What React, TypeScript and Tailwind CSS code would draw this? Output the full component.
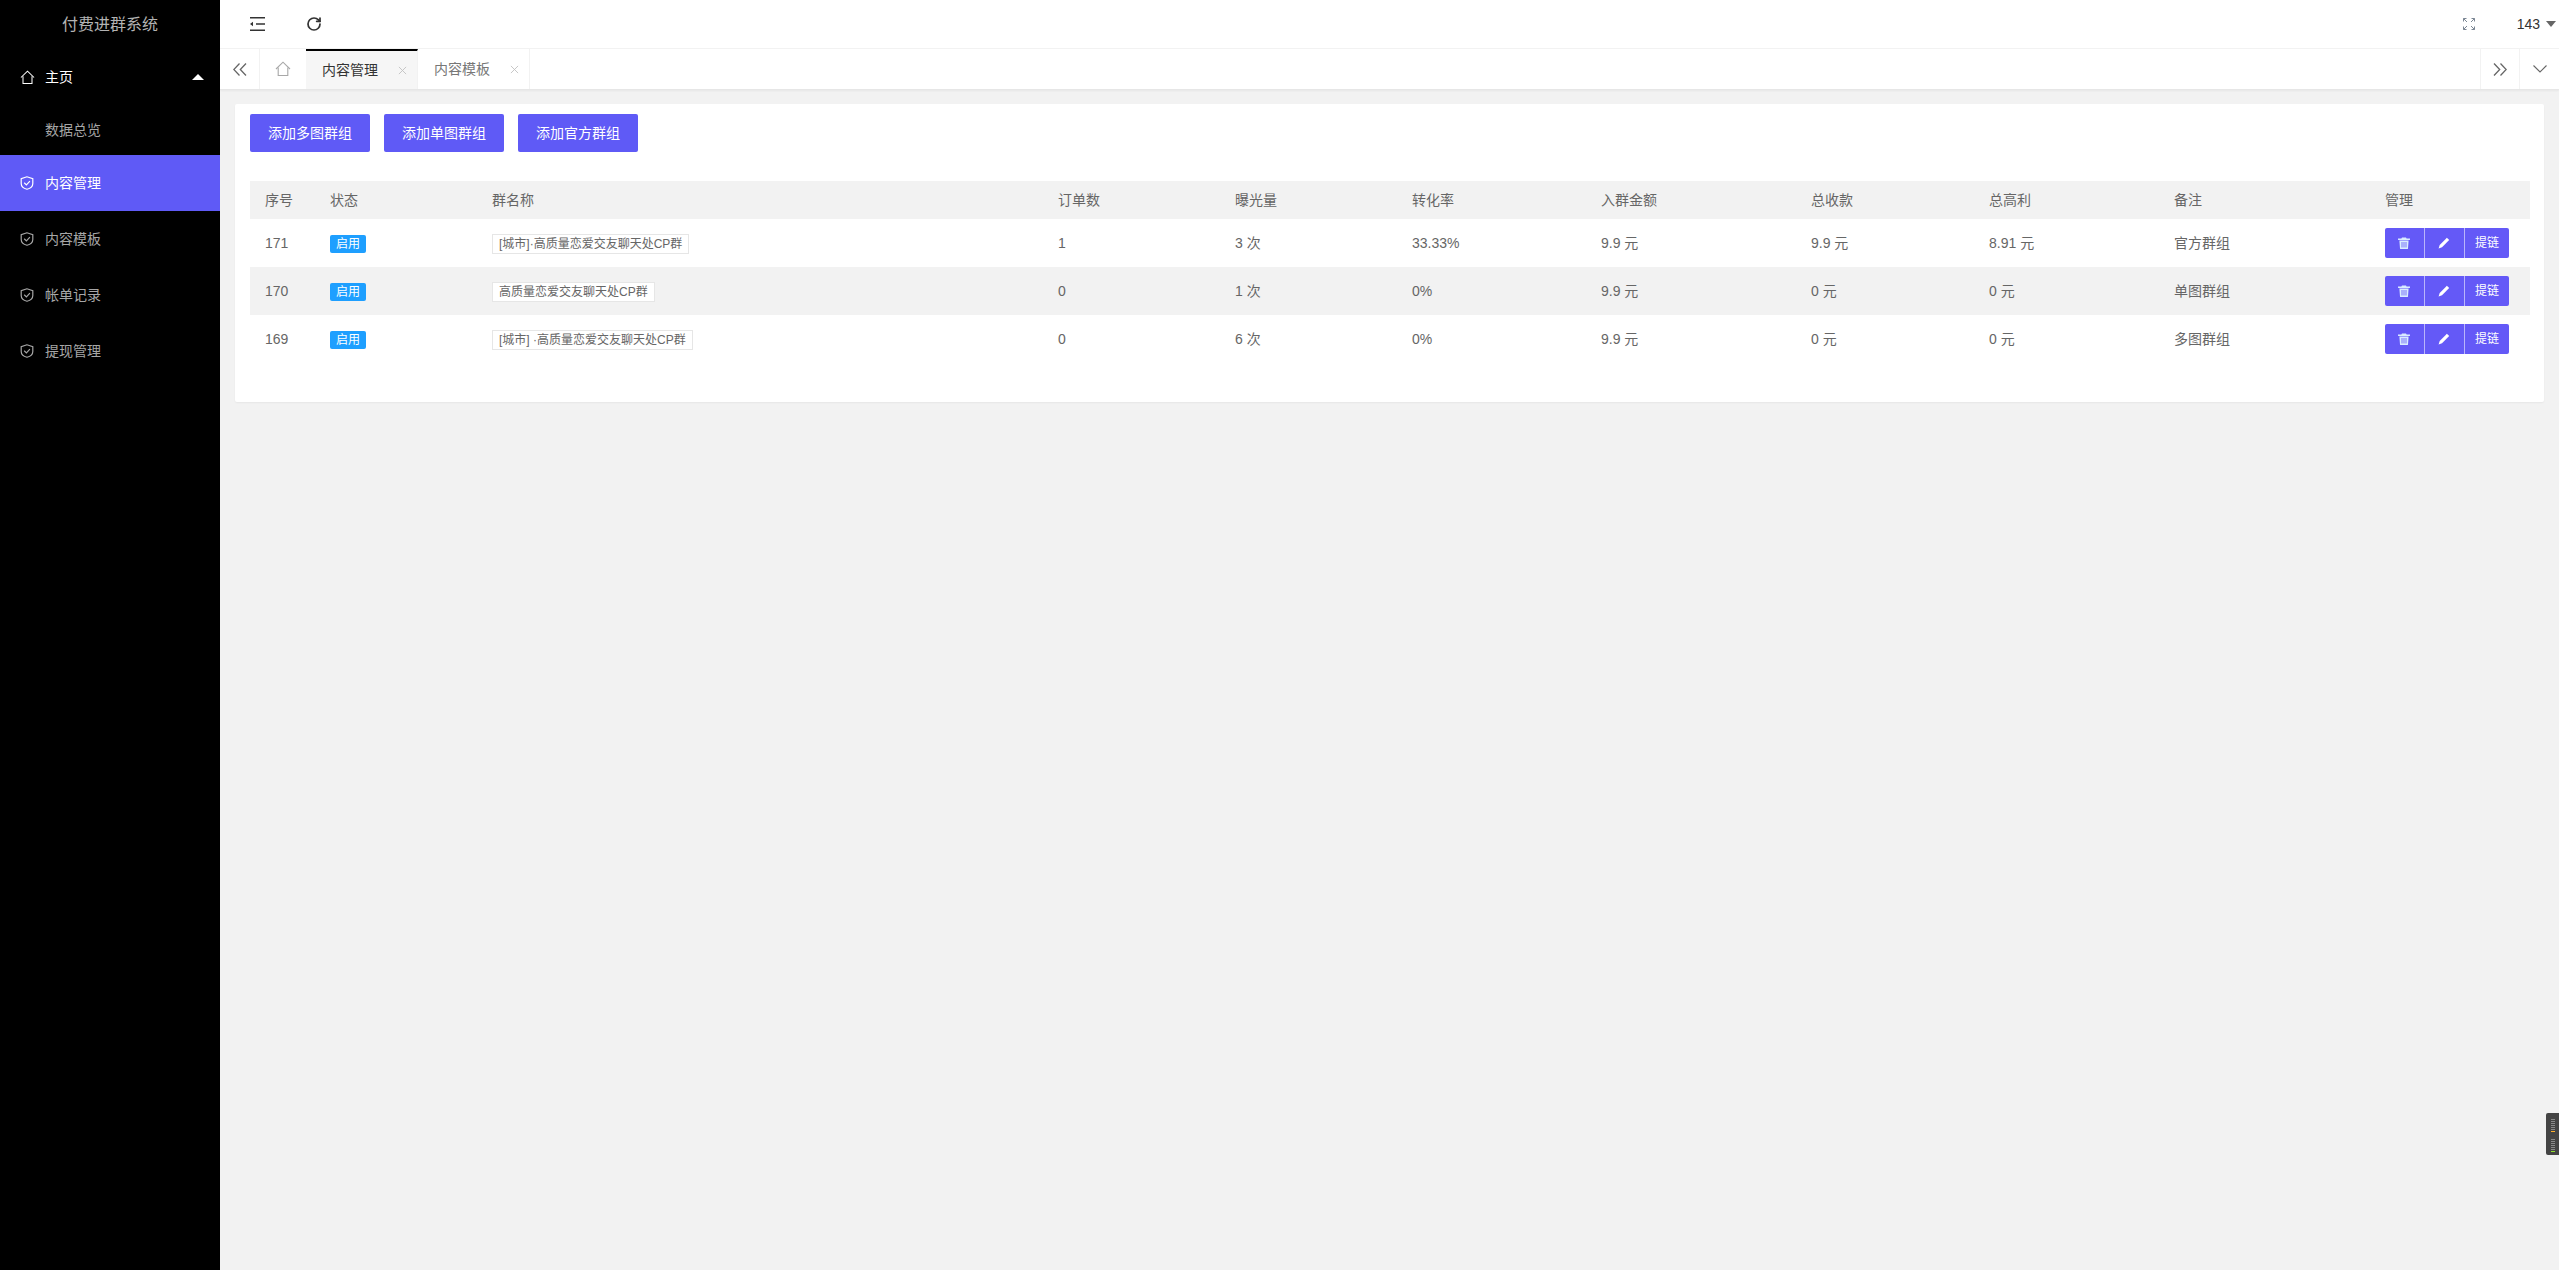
import { RotateCw } from "lucide-react";

const ROWS = [
  { id: 171, name: "[城市]·高质量恋爱交友聊天处CP群", orders: "1", views: "3 次", rate: "33.33%", fee: "9.9 元", income: "9.9 元", profit: "8.91 元", note: "官方群组" },
  { id: 170, name: "高质量恋爱交友聊天处CP群", orders: "0", views: "1 次", rate: "0%", fee: "9.9 元", income: "0 元", profit: "0 元", note: "单图群组" },
  { id: 169, name: "[城市] ·高质量恋爱交友聊天处CP群", orders: "0", views: "6 次", rate: "0%", fee: "9.9 元", income: "0 元", profit: "0 元", note: "多图群组" },
];

const HomeIcon = ({ className }: { className?: string }) => (
  <svg viewBox="0 0 16 16" fill="none" stroke="currentColor" strokeWidth="1.1" className={className}>
    <path d="M1 8 8 1.2 15 8" />
    <path d="M3.2 6.6V14.5H12.8V6.6" />
  </svg>
);

const ShieldIcon = () => (
  <svg viewBox="0 0 14 14" fill="none" stroke="currentColor" strokeWidth="1.2" className="h-[14px] w-[14px] shrink-0">
    <path d="M7 .8 1.2 2.6V7.4C1.2 10.4 4 12.4 7 13.3 10 12.4 12.8 10.4 12.8 7.4V2.6Z" />
    <path d="M4.2 6.8 6.4 8.9 9.9 5.2" />
  </svg>
);

const SideItem = ({ label, active }: { label: string; active?: boolean }) => (
  <div className={`flex h-[56px] items-center gap-[11px] pl-[20px] text-[14px] ${active ? "bg-[#5f5af6] text-white" : "text-[#a6a6a6]"}`}>
    <ShieldIcon />
    <span>{label}</span>
  </div>
);

const TabClose = () => (
  <svg viewBox="0 0 10 10" stroke="#c2c2c2" strokeWidth="1" className="ml-auto h-[9px] w-[9px]">
    <path d="M1 1 9 9M9 1 1 9" />
  </svg>
);

const Tab = ({ label, active }: { label: string; active?: boolean }) => (
  <div className={`flex h-full w-[112px] items-center border-r border-[#f2f2f2] pl-[16px] pr-[10px] text-[14px] ${active ? "border-t-2 border-t-black bg-[#f6f6f6] text-[#333]" : "text-[#777]"}`}>
    <span>{label}</span>
    <TabClose />
  </div>
);

const HEAD = [
  { label: "序号", w: "w-[65px]" },
  { label: "状态", w: "w-[162px]" },
  { label: "群名称", w: "w-[566px]" },
  { label: "订单数", w: "w-[177px]" },
  { label: "曝光量", w: "w-[177px]" },
  { label: "转化率", w: "w-[189px]" },
  { label: "入群金额", w: "w-[210px]" },
  { label: "总收款", w: "w-[178px]" },
  { label: "总高利", w: "w-[185px]" },
  { label: "备注", w: "w-[211px]" },
  { label: "管理", w: "w-[160px]" },
];

const Cell = ({ children }: { children: React.ReactNode }) => (
  <td className="pl-[15px] align-middle">{children}</td>
);

const Actions = () => (
  <div className="flex h-[30px] w-[124px] overflow-hidden rounded-[2px] bg-[#6459f7] text-[12px] text-white">
    <div className="flex w-[40px] items-center justify-center border-r border-[#b9b5fb] pr-[2px]">
      <svg viewBox="0 0 12 12" className="h-[12px] w-[12px] fill-[#d9ecff]">
        <path d="M4 .5h4l.6 1H11.6a.4.4 0 0 1 0 1.4H.4a.4.4 0 0 1 0-1.4H3.4Z" />
        <path fillRule="evenodd" d="M1.4 3.6h9.2L10 11.4a.6.6 0 0 1-.6.6H2.600a.6.6 0 0 1-.6-.6ZM3.600 5v5.400h.8V5Zm2 0v5.400h.8V5Zm2 0v5.400h.8V5Z" />
      </svg>
    </div>
    <div className="flex w-[40px] items-center justify-center border-r border-[#b9b5fb] pr-[2px]">
      <svg viewBox="0 0 12 12" className="h-[12px] w-[12px] fill-white">
        <path d="M8.900.8 11.200 3.100 4 10.300.6 11.400 1.700 8Z" />
      </svg>
    </div>
    <div className="flex flex-1 items-center justify-center">提链</div>
  </div>
);

const App = () => {
  return (
    <div className="flex h-screen w-full overflow-hidden bg-[#f2f2f2] font-['Liberation_Sans','Noto_Sans_CJK_SC',sans-serif] text-[14px] text-[#666]">
      <aside className="w-[220px] shrink-0 bg-black">
        <div className="flex h-[49px] items-center justify-center text-[16px] text-[#b3b3b3]">付费进群系统</div>
        <div className="flex h-[56px] items-center gap-[10px] pl-[20px] pr-[16px] text-white">
          <HomeIcon className="h-[15px] w-[15px]" />
          <span>主页</span>
          <span className="ml-auto h-0 w-0 border-x-[6px] border-b-[6px] border-x-transparent border-b-white" />
        </div>
        <div className="flex h-[50px] items-center pl-[45px] text-[#a6a6a6]">数据总览</div>
        <SideItem label="内容管理" active />
        <SideItem label="内容模板" />
        <SideItem label="帐单记录" />
        <SideItem label="提现管理" />
      </aside>

      <main className="flex min-w-0 flex-1 flex-col">
        <header className="flex h-[49px] items-center border-b border-[#f2f2f2] bg-white pl-[30px] pr-[3px]">
          <svg viewBox="0 0 15 14" className="h-[14px] w-[15px] fill-[#333]">
            <path d="M0 0h15v1.400H0ZM0 12.600h15V14H0ZM6 6.300h9v1.400H6ZM0 7l3-2.200v4.400Z" />
          </svg>
          <RotateCw size={16} strokeWidth={2.6} className="ml-[41px] text-[#333]" />
          <svg viewBox="0 0 12 12" fill="none" stroke="#7c8794" strokeWidth="1" className="ml-auto h-[12px] w-[12px]">
            <path d="M.5 3.500V.5H3.500M.5.5 4 4M8.500.5H11.500V3.500M11.500.5 8 4M.5 8.500V11.500H3.500M.5 11.500 4 8M8.500 11.500H11.500V8.500M11.500 11.500 8 8" />
          </svg>
          <span className="ml-[42px] text-[14px] text-[#333]">143</span>
          <span className="ml-[6px] h-0 w-0 border-x-[5px] border-t-[6px] border-x-transparent border-t-[#666]" />
        </header>

        <div className="flex h-[41px] items-center border-b border-[#e6e6e6] bg-white shadow-[0_1px_2px_rgba(0,0,0,0.05)]">
          <div className="flex h-full w-[40px] items-center justify-center border-r border-[#f2f2f2]">
            <svg viewBox="0 0 14 13" fill="none" stroke="#666" strokeWidth="1.300" className="h-[13px] w-[14px]">
              <path d="M6.500.5.800 6.500 6.500 12.500M13 .5 7.300 6.500 13 12.500" />
            </svg>
          </div>
          <div className="flex h-full w-[46px] items-center justify-center">
            <HomeIcon className="h-[16px] w-[16px] text-[#a8a8a8]" />
          </div>
          <Tab label="内容管理" active />
          <Tab label="内容模板" />
          <div className="ml-auto flex h-full w-[40px] items-center justify-center border-x border-[#f2f2f2]">
            <svg viewBox="0 0 14 13" fill="none" stroke="#666" strokeWidth="1.300" className="h-[13px] w-[14px]">
              <path d="M1 .5 6.700 6.500 1 12.500M7.500.5 13.200 6.500 7.500 12.500" />
            </svg>
          </div>
          <div className="flex h-full w-[39px] items-center justify-center">
            <svg viewBox="0 0 14 8" fill="none" stroke="#666" strokeWidth="1.100" className="h-[8px] w-[14px]">
              <path d="M.5.5 7 7 13.500.5" />
            </svg>
          </div>
        </div>

        <div className="px-[15px] pt-[14px]">
          <section className="rounded-[2px] bg-white px-[15px] pb-[39px] pt-[10px] shadow-[0_1px_2px_rgba(0,0,0,0.05)]">
            <div className="flex gap-[14px]">
              {["添加多图群组", "添加单图群组", "添加官方群组"].map((label) => (
                <button key={label} className="h-[38px] w-[120px] rounded-[2px] bg-[#5f5af6] text-[14px] text-white">
                  {label}
                </button>
              ))}
            </div>

            <table className="mt-[29px] w-full table-fixed border-collapse">
              <thead>
                <tr className="h-[38px] bg-[#f2f2f2]">
                  {HEAD.map((col) => (
                    <th key={col.label} className={`${col.w} pl-[15px] text-left font-normal`}>
                      {col.label}
                    </th>
                  ))}
                </tr>
              </thead>
              <tbody>
                {ROWS.map((row, i) => (
                  <tr key={row.id} className={`h-[48px] ${i === 1 ? "bg-[#f2f2f2]" : "bg-white"}`}>
                    <Cell>{row.id}</Cell>
                    <Cell>
                      <span className="mt-[2px] flex h-[18px] w-[36px] items-center justify-center rounded-[2px] bg-[#1e9fff] text-[12px] text-white">启用</span>
                    </Cell>
                    <Cell>
                      <span className="mt-[2px] flex h-[20px] w-fit items-center whitespace-pre border border-[#e6e6e6] bg-white px-[6px] text-[12px]">{row.name}</span>
                    </Cell>
                    <Cell>{row.orders}</Cell>
                    <Cell>{row.views}</Cell>
                    <Cell>{row.rate}</Cell>
                    <Cell>{row.fee}</Cell>
                    <Cell>{row.income}</Cell>
                    <Cell>{row.profit}</Cell>
                    <Cell>{row.note}</Cell>
                    <Cell>
                      <Actions />
                    </Cell>
                  </tr>
                ))}
              </tbody>
            </table>
          </section>
        </div>
      </main>

      {/* floating meter stuck to the right edge */}
      <div className="fixed right-0 top-[1113px] flex h-[42px] w-[13px] flex-col items-center gap-[1px] rounded-l-[2px] bg-[#444] pl-[1px] pt-[6px]">
        {[0, 1, 2, 3, 4, 5].map((n) => (
          <span key={n} className="h-[1px] w-[4px] bg-[#8a8a8a]" />
        ))}
        <span className="h-[1px] w-[4px] bg-[#ffb02e]" />
        <span className="h-[5px] w-[4px]" />
        {[6, 7, 8, 9, 10, 11].map((n) => (
          <span key={n} className="h-[1px] w-[4px] bg-[#8a8a8a]" />
        ))}
        <span className="h-[1px] w-[4px] bg-[#8fe02e]" />
      </div>
    </div>
  );
};

export default App;
